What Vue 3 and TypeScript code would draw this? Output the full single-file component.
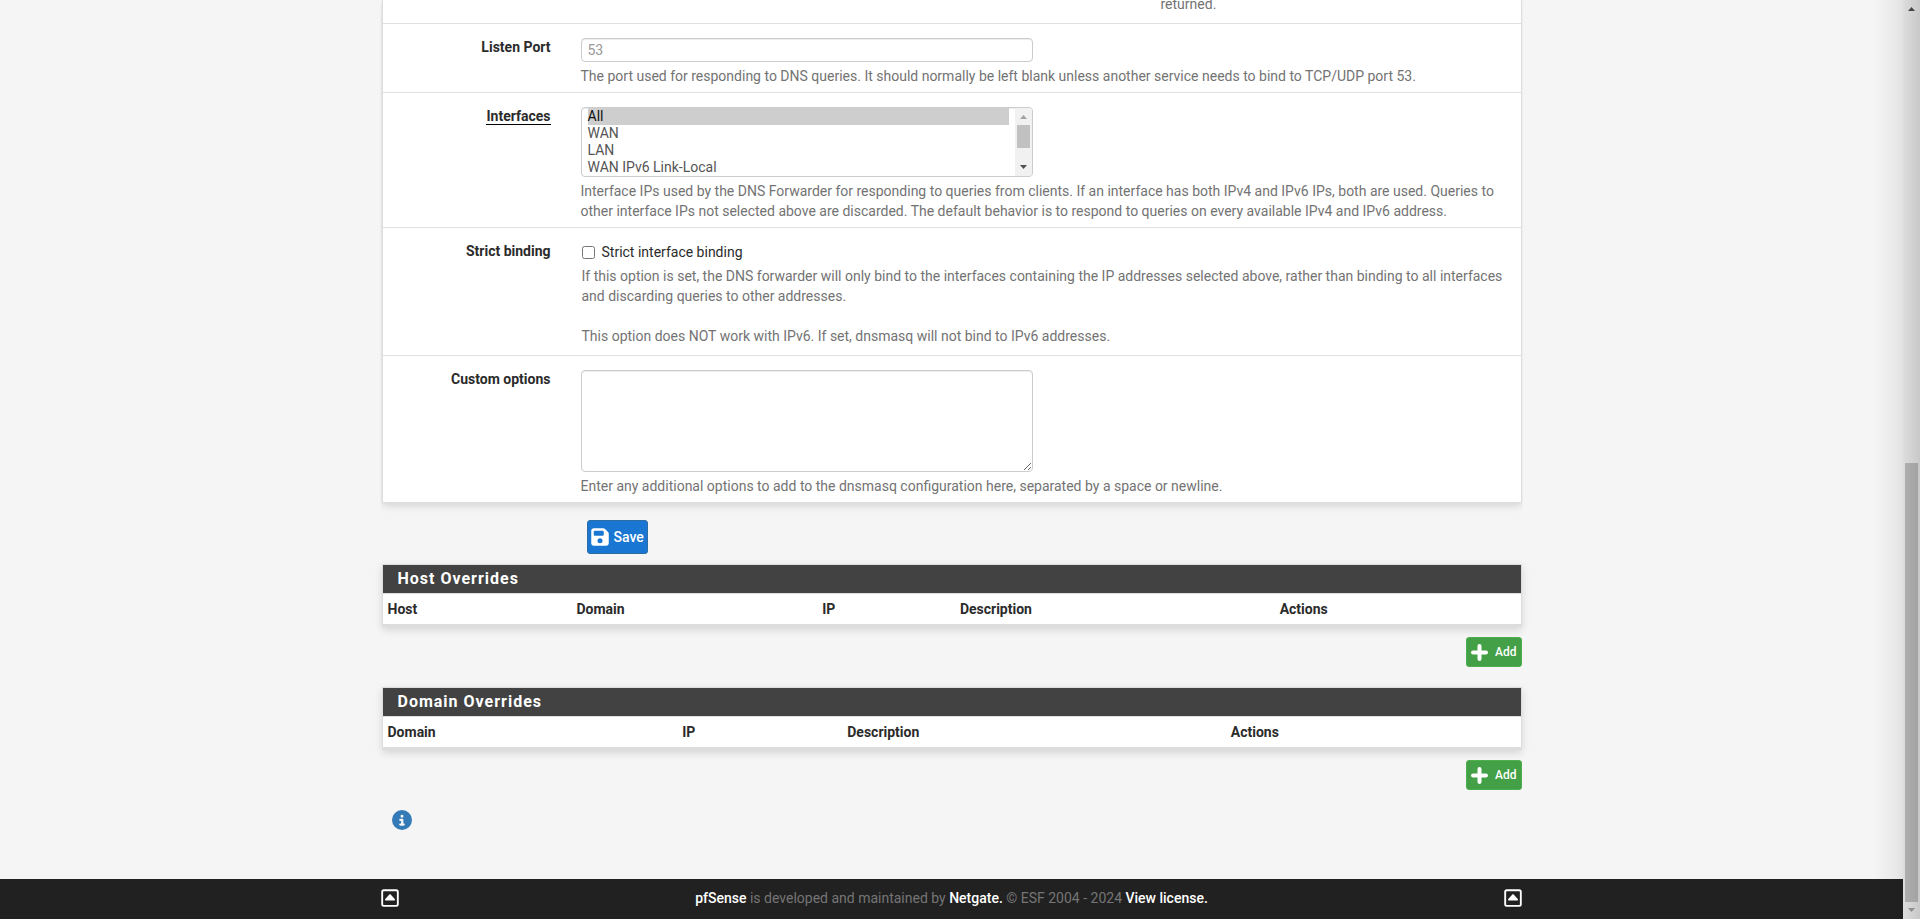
<script setup lang="ts">
import { ref } from 'vue'

interface Column {
  title: string
  width: string
}
interface OverridePanel {
  title: string
  columns: Column[]
}

const interfaces = ['All', 'WAN', 'LAN', 'WAN IPv6 Link-Local', 'LAN IPv6 Link-Local', 'Localhost']
const selected = ref<string[]>(['All'])
const port = ref('')
const strict = ref(false)
const options = ref('')

const panels: OverridePanel[] = [
  {
    title: 'Host Overrides',
    columns: [
      { title: 'Host', width: '16.6%' },
      { title: 'Domain', width: '21.6%' },
      { title: 'IP', width: '12.1%' },
      { title: 'Description', width: '28.1%' },
      { title: 'Actions', width: '21.6%' },
    ],
  },
  {
    title: 'Domain Overrides',
    columns: [
      { title: 'Domain', width: '25.9%' },
      { title: 'IP', width: '14.5%' },
      { title: 'Description', width: '33.7%' },
      { title: 'Actions', width: '25.9%' },
    ],
  },
]
</script>

<template>
  <div class="window">
    <div class="page">
      <main class="container">
        <form @submit.prevent>
          <section class="panel settings">
            <div class="row tail">
              <p class="help">returned.</p>
            </div>

            <div class="row">
              <label class="name" for="port">Listen Port</label>
              <div class="field">
                <input id="port" v-model="port" class="control" type="text" placeholder="53" />
                <p class="help">The port used for responding to DNS queries. It should normally be left blank unless another service needs to bind to TCP/UDP port 53.</p>
              </div>
            </div>

            <div class="row">
              <label class="name" for="interfaces"><span class="required">Interfaces</span></label>
              <div class="field">
                <div class="list">
                  <select id="interfaces" v-model="selected" class="control" multiple size="4">
                    <option v-for="name in interfaces" :key="name" :value="name">{{ name }}</option>
                  </select>
                  <div class="list-bar" aria-hidden="true">
                    <svg class="arrow faded" viewBox="0 0 7 4"><path d="M0 4 3.500 0 7 4z" /></svg>
                    <span class="list-thumb"></span>
                    <svg class="arrow" viewBox="0 0 7 4"><path d="M0 0h7L3.500 4z" /></svg>
                  </div>
                </div>
                <p class="help">Interface IPs used by the DNS Forwarder for responding to queries from clients. If an interface has both IPv4 and IPv6 IPs, both are used. Queries to other interface IPs not selected above are discarded. The default behavior is to respond to queries on every available IPv4 and IPv6 address.</p>
              </div>
            </div>

            <div class="row">
              <span class="name">Strict binding</span>
              <div class="field checks">
                <label class="check"><input v-model="strict" type="checkbox" />Strict interface binding</label>
                <p class="help">If this option is set, the DNS forwarder will only bind to the interfaces containing the IP addresses selected above, rather than binding to all interfaces and discarding queries to other addresses.<br /><br />This option does NOT work with IPv6. If set, dnsmasq will not bind to IPv6 addresses.</p>
              </div>
            </div>

            <div class="row">
              <label class="name" for="options">Custom options</label>
              <div class="field">
                <textarea id="options" v-model="options" class="control" rows="5"></textarea>
                <p class="help">Enter any additional options to add to the dnsmasq configuration here, separated by a space or newline.</p>
              </div>
            </div>
          </section>

          <div class="submit">
            <button class="button save" type="submit">
              <svg viewBox="0 0 448 512"><path d="M64 32C28.700 32 0 60.700 0 96v320c0 35.300 28.700 64 64 64h320c35.300 0 64-28.700 64-64V173.300c0-17-6.700-33.300-18.700-45.300L352 50.700C340 38.700 323.700 32 306.700 32H64zm0 96c0-17.700 14.300-32 32-32h192c17.700 0 32 14.300 32 32v64c0 17.700-14.300 32-32 32H96c-17.700 0-32-14.300-32-32v-64zm160 160a64 64 0 1 1 0 128 64 64 0 1 1 0-128z" /></svg>
              Save
            </button>
          </div>
        </form>

        <template v-for="panel in panels" :key="panel.title">
          <section class="panel overrides">
            <h2>{{ panel.title }}</h2>
            <table>
              <thead>
                <tr>
                  <th v-for="column in panel.columns" :key="column.title" scope="col" :style="{ width: column.width }">{{ column.title }}</th>
                </tr>
              </thead>
            </table>
          </section>
          <nav class="actions">
            <a class="button add" href="#">
              <svg viewBox="0 0 17 17"><path d="M8.500 2v13M2 8.500h13" /></svg>
              Add
            </a>
          </nav>
        </template>

        <button class="info" type="button" aria-label="Information">
          <svg viewBox="0 0 512 512"><path d="M256 512A256 256 0 1 0 256 0a256 256 0 1 0 0 512zM212 344h20v-64h-20c-16 0-28-12-28-28s12-28 28-28h52c16 0 28 12 28 28v92h8c16 0 28 12 28 28s-12 28-28 28h-88c-16 0-28-12-28-28s12-28 28-28zm44-224a38 38 0 1 1 0 76 38 38 0 1 1 0-76z" /></svg>
        </button>
      </main>

      <footer>
        <div class="container footer-row">
          <a href="#" aria-label="Back to top"><svg viewBox="0 0 448 512"><path fill-rule="evenodd" d="M64 32h320a64 64 0 0 1 64 64v320a64 64 0 0 1-64 64H64a64 64 0 0 1-64-64V96a64 64 0 0 1 64-64zm0 48a16 16 0 0 0-16 16v320a16 16 0 0 0 16 16h320a16 16 0 0 0 16-16V96a16 16 0 0 0-16-16zM224 160c7 0 13 3 17 8l104 112c7 7 9 17 5 26s-12 14-22 14H120c-10 0-18-5-22-14s-2-19 5-26l104-112c4-5 10-8 17-8z" /></svg></a>
          <p><a href="#">pfSense</a> is developed and maintained by <a href="#">Netgate.</a> © ESF 2004 - 2024 <a href="#">View license.</a></p>
          <a href="#" aria-label="Back to top"><svg viewBox="0 0 448 512"><path fill-rule="evenodd" d="M64 32h320a64 64 0 0 1 64 64v320a64 64 0 0 1-64 64H64a64 64 0 0 1-64-64V96a64 64 0 0 1 64-64zm0 48a16 16 0 0 0-16 16v320a16 16 0 0 0 16 16h320a16 16 0 0 0 16-16V96a16 16 0 0 0-16-16zM224 160c7 0 13 3 17 8l104 112c7 7 9 17 5 26s-12 14-22 14H120c-10 0-18-5-22-14s-2-19 5-26l104-112c4-5 10-8 17-8z" /></svg></a>
        </div>
      </footer>
    </div>

    <div class="scrollbar" aria-hidden="true">
      <svg class="arrow" viewBox="0 0 7 4"><path d="M0 4 3.500 0 7 4z" /></svg>
      <span class="before"></span>
      <span class="thumb"></span>
      <svg class="arrow faded" viewBox="0 0 7 4"><path d="M0 0h7L3.500 4z" /></svg>
    </div>
    <div class="edge" aria-hidden="true"></div>
  </div>
</template>

<style>
html,
body {
  margin: 0;
  background: #f5f5f5;
}
</style>

<style scoped>
.window,
.window * {
  box-sizing: border-box;
}
.window {
  position: relative;
  display: flex;
  min-height: 100vh;
  overflow: hidden;
  color: #2b2b2b;
  font: 14px/20px Roboto, "Liberation Sans", sans-serif;
}
.page {
  display: flex;
  flex: 1;
  flex-direction: column;
  min-width: 0;
}
.container {
  width: 100%;
  max-width: 1140px;
  margin: 0 auto;
}
main {
  flex: 1;
}
p {
  margin: 0;
}
svg {
  display: block;
  fill: currentColor;
}
.panel {
  border: 1px solid #ddd;
  background: #fff;
  box-shadow: 0 3px 8px rgba(0, 0, 0, 0.13);
}
.settings {
  border-top: 0;
  clip-path: inset(0 -1px -14px -1px);
}
.row {
  display: grid;
  grid-template-columns: 183px 1fr;
  padding: 14px 14px 6px 0;
  border-bottom: 1px solid #e0e0e0;
}
.row:has(.checks) {
  padding-bottom: 9px;
}
.row:last-child {
  border-bottom: 0;
}
.tail {
  display: flex;
  height: 24px;
  padding: 0 0 0 778px;
}
.tail .help {
  margin-top: -6px;
}
.name {
  padding-right: 15px;
  font-weight: 700;
  line-height: 18px;
  text-align: right;
}
.required {
  border-bottom: 1px solid #000;
}
.field {
  padding-left: 15px;
}
.help {
  margin-top: 4px;
  color: #737373;
}
.control {
  display: block;
  width: 452px;
  max-width: 100%;
  margin: 0;
  padding: 0 6px;
  border: 1px solid #ccc;
  border-radius: 4px;
  outline: 0;
  background: #fff;
  box-shadow: inset 0 1px 1px rgba(0, 0, 0, 0.075);
  color: #555;
  font: inherit;
}
input.control {
  height: 24px;
}
input.control::placeholder {
  color: #999;
}
textarea.control {
  height: 102px;
  resize: both;
}
.list {
  position: relative;
  width: 452px;
  max-width: 100%;
}
select.control {
  height: 70px;
  padding-right: 23px;
  overflow: hidden;
  scrollbar-width: none;
}
option {
  min-height: 17px;
  padding: 0;
  line-height: 17px;
}
.list-bar {
  position: absolute;
  inset: 1px 1px 1px auto;
  display: flex;
  flex-direction: column;
  align-items: center;
  width: 17px;
  padding: 7px 0;
  border-radius: 0 3px 3px 0;
  background: #f1f1f1;
}
.list-thumb {
  width: 13px;
  height: 23px;
  margin: 6px 0 auto;
  background: #c1c1c1;
}
.arrow {
  width: 7px;
  height: 4px;
  color: #505050;
}
.faded {
  color: #a3a3a3;
}
.checks {
  padding-left: 16px;
}
.check {
  display: flex;
  gap: 7px;
}
.check input {
  width: 13px;
  height: 13px;
  margin: 4px 0 0;
}
.submit {
  padding: 17px 0 10px 205px;
}
.button {
  display: flex;
  align-items: center;
  border: 1px solid;
  border-radius: 3px;
  color: #fff;
  font: 500 14px/20px Roboto, "Liberation Sans", sans-serif;
  text-decoration: none;
}
.save {
  gap: 5px;
  height: 34px;
  padding: 0 3px;
  border-color: #2e6da4;
  background: #1976d2;
}
.save svg {
  width: 18px;
  height: 20px;
}
h2 {
  margin: 0;
  padding: 4px 15px;
  border-bottom: 1px solid #ddd;
  background: #424242;
  color: #fff;
  font: 700 16px/20px Roboto, "Liberation Sans", sans-serif;
  letter-spacing: 1px;
}
table {
  width: 100%;
  border-collapse: collapse;
  border-bottom: 2px solid #ddd;
  table-layout: fixed;
}
th {
  padding: 5px;
  font-weight: 700;
  text-align: left;
}
.actions {
  display: flex;
  justify-content: flex-end;
  padding: 10px 0 20px;
}
.add {
  gap: 7px;
  height: 30px;
  padding: 0 4px;
  border-color: #4cae4c;
  background: #43a047;
  font-size: 12px;
}
.add svg {
  width: 17px;
  height: 17px;
  fill: none;
  stroke: currentColor;
  stroke-linecap: round;
  stroke-width: 4px;
}
.info {
  display: block;
  margin: 0 0 0 10px;
  padding: 0;
  border: 0;
  background: none;
  color: #337ab7;
}
.info svg {
  width: 20px;
  height: 20px;
}
footer {
  background: #212121;
  color: #757575;
}
.footer-row {
  display: flex;
  align-items: center;
  justify-content: space-between;
  max-width: 1142px;
  height: 40px;
  padding-bottom: 2px;
}
footer a {
  color: #fff;
  font-weight: 500;
  text-decoration: none;
}
footer svg {
  width: 18px;
  height: 20px;
}
.scrollbar {
  display: flex;
  flex: none;
  flex-direction: column;
  align-items: center;
  width: 17px;
  padding: 7px 0;
  background: #f1f1f1;
}
.before {
  flex: 446;
}
.thumb {
  flex: 439;
  width: 13px;
  margin: 6px 0;
  background: #c1c1c1;
}
.edge {
  position: absolute;
  inset: 0 0 0 auto;
  width: 48px;
  background: linear-gradient(to right, transparent, rgba(0, 0, 0, 0.05) 50%, rgba(0, 0, 0, 0.17));
  pointer-events: none;
}
</style>
